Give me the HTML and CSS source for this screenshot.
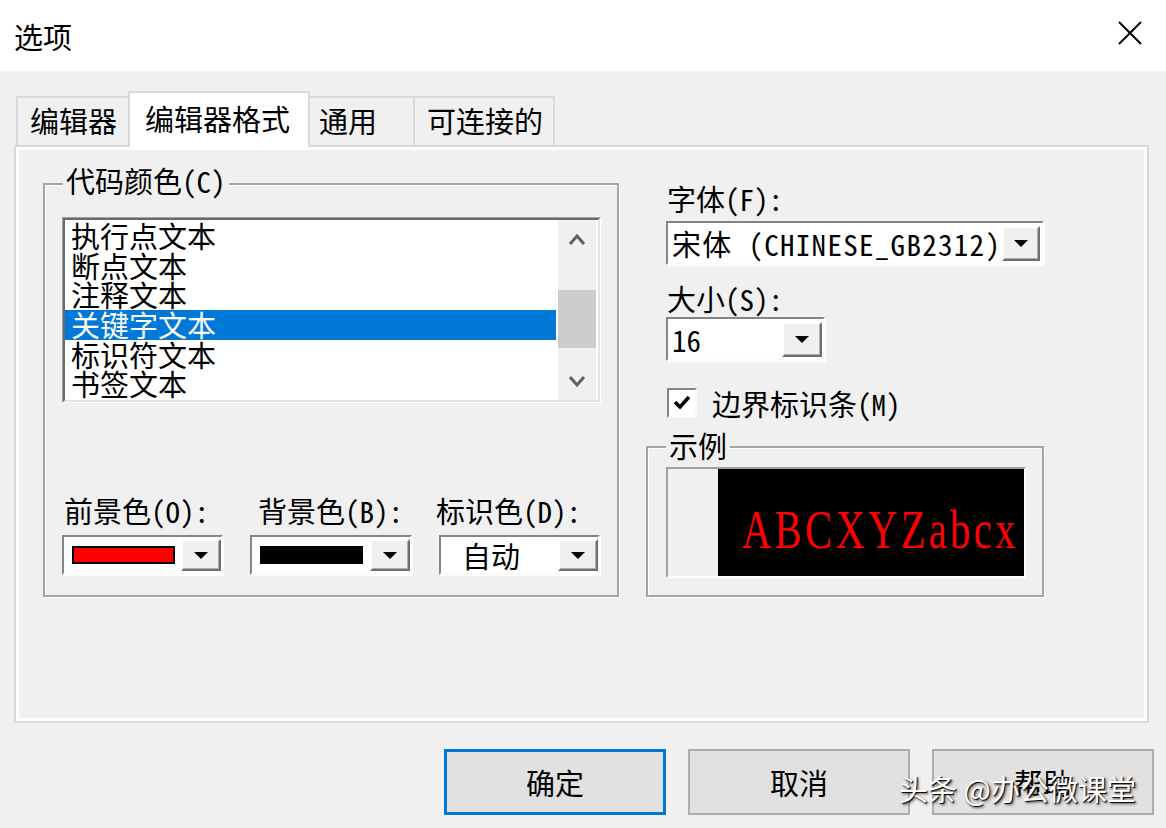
FILE: index.html
```html
<!DOCTYPE html>
<html lang="zh-CN">
<head>
  <meta charset="UTF-8">
  <title>选项</title>
  <link rel="stylesheet" href="styles.css">
</head>
<body>
  <div class="window">
    <!-- タイトルバー -->
    <div class="titlebar">
      <span class="title">选项</span>
      <svg class="close" width="24" height="24" viewBox="0 0 24 24"><path d="M1 1 L23 23 M23 1 L1 23" stroke="#000" stroke-width="2" fill="none"/></svg>
    </div>

    <!-- タブ -->
    <div class="tabs">
      <div class="tab tab-1">编辑器</div>
      <div class="tab active">编辑器格式</div>
      <div class="tab tab-3">通用</div>
      <div class="tab tab-4">可连接的</div>
    </div>

    <div class="panel">
      <!-- 代码颜色 -->
      <div class="group group-colors">
        <span class="group-title">代码颜色(C)</span>
        <div class="listbox">
          <div class="listbox-inner">
            <ul class="items">
              <li>执行点文本</li>
              <li>断点文本</li>
              <li>注释文本</li>
              <li class="selected">关键字文本</li>
              <li>标识符文本</li>
              <li>书签文本</li>
            </ul>
            <div class="scrollbar">
              <div class="arrow-box"><svg width="18" height="13" viewBox="0 0 18 13"><path d="M2 11 L9 3 L16 11" stroke="#606060" stroke-width="3" fill="none"/></svg></div>
              <div class="thumb"></div>
              <div class="arrow-box down"><svg width="18" height="13" viewBox="0 0 18 13"><path d="M2 2 L9 10 L16 2" stroke="#606060" stroke-width="3" fill="none"/></svg></div>
            </div>
          </div>
        </div>
        <div class="color-row">
          <div class="color-field">
            <div class="label label-fg">前景色(O):</div>
            <div class="combo combo-color"><span class="swatch red"></span><span class="drop"></span></div>
          </div>
          <div class="color-field">
            <div class="label label-bg">背景色(B):</div>
            <div class="combo combo-color wide"><span class="swatch black"></span><span class="drop"></span></div>
          </div>
          <div class="color-field">
            <div class="label label-mark">标识色(D):</div>
            <div class="combo combo-color combo-auto"><span class="combo-text">自动</span><span class="drop"></span></div>
          </div>
        </div>
      </div>

      <!-- 右側 -->
      <div class="side">
        <div class="label">字体(F):</div>
        <div class="combo combo-font"><span class="combo-text">宋体 (CHINESE_GB2312)</span><span class="drop"></span></div>
        <div class="label size-label">大小(S):</div>
        <div class="combo combo-size"><span class="combo-text">16</span><span class="drop"></span></div>
        <div class="check-row">
          <span class="checkbox"><svg width="26" height="26" viewBox="0 0 26 26"><path d="M6 12 L11 17 L20 7" stroke="#000" stroke-width="3.5" fill="none"/></svg></span>
          <span class="check-label">边界标识条(M)</span>
        </div>
        <div class="group group-sample">
          <span class="group-title">示例</span>
          <div class="sample">
            <div class="sample-margin"></div>
            <div class="sample-text"><span>ABCXYZabcx</span></div>
          </div>
        </div>
      </div>
    </div>

    <div class="buttons">
      <button class="btn primary">确定</button>
      <button class="btn">取消</button>
      <button class="btn">帮助</button>
    </div>

    <div class="watermark">头条 @办公微课堂</div>
  </div>
</body>
</html>
```

FILE: styles.css
```css
/* ベース */
* { box-sizing: border-box; }
body { margin: 0; background: #f0f0f0; color: #000; font-family: "Noto Sans CJK SC", sans-serif; }
.window { position: relative; width: 1166px; height: 828px; overflow: hidden; }

/* タイトルバー */
.titlebar { height: 71px; background: #fff; display: flex; align-items: center; justify-content: space-between; padding: 0 24px 0 14px; }
.title { font-size: 29px; }
.close { margin-bottom: 6px; }

/* タブ */
.tabs { display: flex; align-items: flex-end; height: 54px; margin-top: 20px; padding-left: 16px; }
.tab { height: 49px; border: 2px solid #d9d9d9; border-bottom: none; background: #f0f0f0; font-size: 29px; line-height: 45px; padding-left: 12px; white-space: nowrap; }
.tab + .tab { margin-left: -2px; }
.tab-1 { width: 114px; }
.tab-3 { width: 107px; padding-left: 9px; }
.tab-4 { width: 142px; }
.tab.active { width: 182px; height: 56px; margin-bottom: -2px; background: #fff; position: relative; z-index: 1; line-height: 50px; padding-left: 15px; }

/* タブの中身 */
.panel {
  width: 1135px; height: 578px; margin-left: 14px;
  border: 2px solid #d9d9d9; box-shadow: inset 0 0 0 3px #fff;
  display: flex; align-items: flex-start; padding: 36px 0 0 27px;
  font-family: "Noto Sans Mono CJK SC", "Liberation Mono", "Noto Sans CJK SC", monospace; font-size: 29px;
}
.label { line-height: 30px; white-space: nowrap; }

/* グループ枠 */
.group { position: relative; border: 2px solid #a5a5a5; box-shadow: 1px 1px 0 #fff, inset 1px 1px 0 #fff; }
.group-title { position: absolute; background: #f0f0f0; padding: 0 3px; line-height: 30px; white-space: nowrap; }
.group-colors { width: 576px; height: 414px; padding: 32px 0 0 17px; }
.group-colors .group-title { top: -20px; left: 18px; }

/* リストボックス */
.listbox { width: 539px; height: 186px; border: 1px solid; border-color: #a0a0a0 #fff #fff #a0a0a0; }
.listbox-inner { height: 100%; border: 2px solid; border-color: #696969 #e3e3e3 #e3e3e3 #696969; background: #fff; display: flex; }
.items { list-style: none; margin: 0; padding: 1px 0 0; width: 491px; }
.items li { height: 29.7px; line-height: 29.7px; padding-left: 6px; white-space: nowrap; }
.items li.selected { background: #0078d7; color: #fff; }
.scrollbar { width: 38px; margin-left: 2px; background: #f0f0f0; display: flex; flex-direction: column; }
.arrow-box { height: 38px; display: flex; align-items: center; justify-content: center; }
.arrow-box.down { margin-top: auto; }
.thumb { height: 58px; margin-top: 32px; background: #cdcdcd; }

/* 色選択 */
.color-row { display: flex; gap: 27px; margin-top: 92px; }
.color-row .label { margin-bottom: 10px; }
.label-fg { margin-left: 2px; }
.label-bg { margin-left: 8px; }
.label-mark { margin-left: -3px; }
.combo { display: flex; align-items: center; border: 2px solid; border-color: #858585 #fafafa #fafafa #858585; background: #fff; box-shadow: 1px 1px 0 #fff; }
.combo-color { width: 161px; height: 40px; padding-left: 8px; }
.combo-color.wide { width: 162px; }
.combo-auto { padding-left: 21px; }
.swatch { width: 103px; height: 18px; border: 2px solid #000; }
.swatch.red { background: #f00; }
.swatch.black { background: #000; }
.combo-text { white-space: nowrap; line-height: 30px; }
.drop {
  width: 40px; height: 32px; margin-left: auto;
  border: 2px solid; border-color: #fff #6f6f6f #6f6f6f #fff; box-shadow: inset -1px -1px 0 #b0b0b0;
  background: #f0f0f0; display: flex; align-items: center; justify-content: center;
}
.drop::after { content: ""; border-left: 7px solid transparent; border-right: 7px solid transparent; border-top: 7px solid #000; }

/* 右側 */
.side { width: 398px; margin-left: 27px; }
.side > .label { margin-left: 21px; }
.combo-font { width: 378px; height: 44px; margin: 8px 0 0 20px; padding: 0 2px 0 4px; }
.combo-font .combo-text { letter-spacing: 1.3px; }
.combo-font .drop { width: 38px; height: 35px; }
.size-label { margin-top: 18px; }
.combo-size { width: 159px; height: 44px; margin: 4px 0 0 20px; padding: 0 1px 0 4px; }
.combo-size .drop { height: 35px; }
.check-row { display: flex; align-items: center; margin: 27px 0 0 21px; height: 30px; }
.checkbox { width: 30px; height: 30px; border: 2px solid; border-color: #858585 #fafafa #fafafa #858585; background: #fff; display: flex; }
.check-label { margin-left: 15px; line-height: 30px; white-space: nowrap; }

/* 示例 */
.group-sample { width: 398px; height: 151px; margin-top: 28px; padding: 19px 0 0 18px; }
.group-sample .group-title { top: -18px; left: 18px; }
.sample { width: 360px; height: 111px; border: 2px solid; border-color: #a0a0a0 #fff #fff #a0a0a0; display: flex; }
.sample-margin { width: 50px; background: #f0f0f0; }
.sample-text {
  flex: 1; background: #000; color: #f00; overflow: hidden; white-space: nowrap;
  font-family: "Liberation Serif", serif; font-size: 54px; line-height: 54px;
  padding: 34px 0 0 24px;
}
.sample-text span { display: inline-block; letter-spacing: 4.5px; transform: scaleX(0.75); transform-origin: left; }

/* ボタン */
.buttons { display: flex; justify-content: flex-end; gap: 22px; padding-right: 12px; margin-top: 26px; }
.btn { width: 222px; height: 66px; border: 2px solid #adadad; background: #e1e1e1; font-family: "Noto Sans CJK SC", sans-serif; font-size: 29px; color: #000; padding: 0; }
.btn.primary { border: 3px solid #0078d7; }

/* 透かし */
.watermark {
  position: absolute; left: 899px; top: 770px;
  font-size: 29px; line-height: 36px; color: #fff; white-space: nowrap;
  text-shadow: 1px 1px 1px #000, 2px 2px 3px rgba(0,0,0,0.6);
}
```
